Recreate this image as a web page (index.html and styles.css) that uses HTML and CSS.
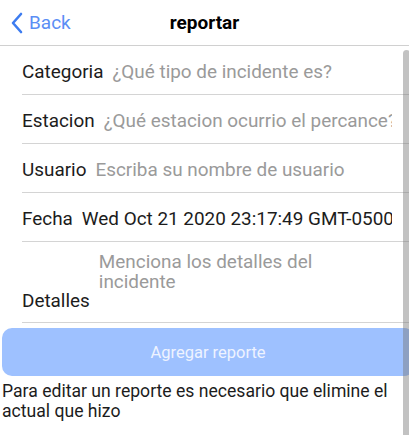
FILE: index.html
```html
<!DOCTYPE html>
<html lang="es">
<head>
<meta charset="utf-8">
<title>reportar</title>
<link rel="stylesheet" href="styles.css">
</head>
<body>
<div class="screen">
  <header class="header">
    <div class="back">
      <svg class="chev" width="12" height="22" viewBox="0 0 12 22"><path d="M10 2 L2 11 L10 20" fill="none" stroke="#3d7cf0" stroke-width="2.6" stroke-linecap="round" stroke-linejoin="round"/></svg>
      <span class="back-text">Back</span>
    </div>
    <div class="title">reportar</div>
    <div></div>
  </header>
  <main class="form">
    <div class="row"><span class="label">Categoria</span><span class="field ph">¿Qué tipo de incidente es?</span></div>
    <div class="row"><span class="label">Estacion</span><span class="field ph">¿Qué estacion ocurrio el percance?</span></div>
    <div class="row"><span class="label">Usuario</span><span class="field ph">Escriba su nombre de usuario</span></div>
    <div class="row"><span class="label">Fecha</span><span class="field val">Wed Oct 21 2020 23:17:49 GMT-0500</span></div>
    <div class="row row-area"><span class="label">Detalles</span><span class="area ph">Menciona los detalles del<br>incidente</span></div>
    <button class="btn" disabled>Agregar reporte</button>
    <p class="note">Para editar un reporte es necesario que elimine el actual que hizo</p>
  </main>
  <div class="scrollbar"></div>
</div>
</body>
</html>
```

FILE: styles.css
```css
html, body {
  margin: 0;
  padding: 0;
  background: #fff;
}
body {
  font-family: Roboto, "Liberation Sans", sans-serif;
  color: #1c1c1c;
}
.screen {
  position: relative;
  width: 409px;
  height: 435px;
  overflow: hidden;
}
.header {
  height: 45px;
  border-bottom: 1px solid #d0d0d0;
  display: grid;
  grid-template-columns: 1fr auto 1fr;
  align-items: center;
}
.back {
  display: flex;
  align-items: center;
  gap: 6px;
  padding-left: 11px;
}
.chev { display: block; }
.back-text {
  font-size: 19px;
  color: #5b8ef5;
}
.title {
  font-size: 19px;
  font-weight: bold;
  color: #000;
}
.form {
  display: flex;
  flex-direction: column;
}
.row {
  margin-left: 22px;
  border-bottom: 1px solid #d4d4d4;
  display: flex;
  align-items: center;
  gap: 9px;
  padding-right: 17px;
  padding-top: 3px;
  box-sizing: border-box;
  height: 49px;
  font-size: 18.9px;
  overflow: hidden;
}
.label {
  color: #1c1c1c;
  white-space: nowrap;
  flex: none;
}
.field {
  flex: 1;
  min-width: 0;
  white-space: nowrap;
  overflow: hidden;
}
.ph { color: #9a9a9a; }
.val { color: #1c1c1c; }
.row-area {
  height: 81px;
  align-items: flex-end;
  padding-top: 0;
  padding-bottom: 10px;
}
.area {
  align-self: flex-start;
  padding-top: 10px;
  line-height: 20px;
  flex: 1;
}
.btn {
  margin: 5px 0 0 2px;
  height: 48px;
  width: 412px;
  border: none;
  border-radius: 10px;
  background: #9ec1ff;
  color: #eef3ff;
  font-family: Roboto, "Liberation Sans", sans-serif;
  font-size: 16.5px;
}
.note {
  margin: 5px 0 0 2px;
  font-size: 17.6px;
  line-height: 20px;
  color: #1c1c1c;
}
.scrollbar {
  position: absolute;
  left: 403px;
  top: 50px;
  width: 7px;
  height: 400px;
  border-radius: 4px 4px 0 0;
  background: rgba(120, 120, 120, 0.45);
}
```
